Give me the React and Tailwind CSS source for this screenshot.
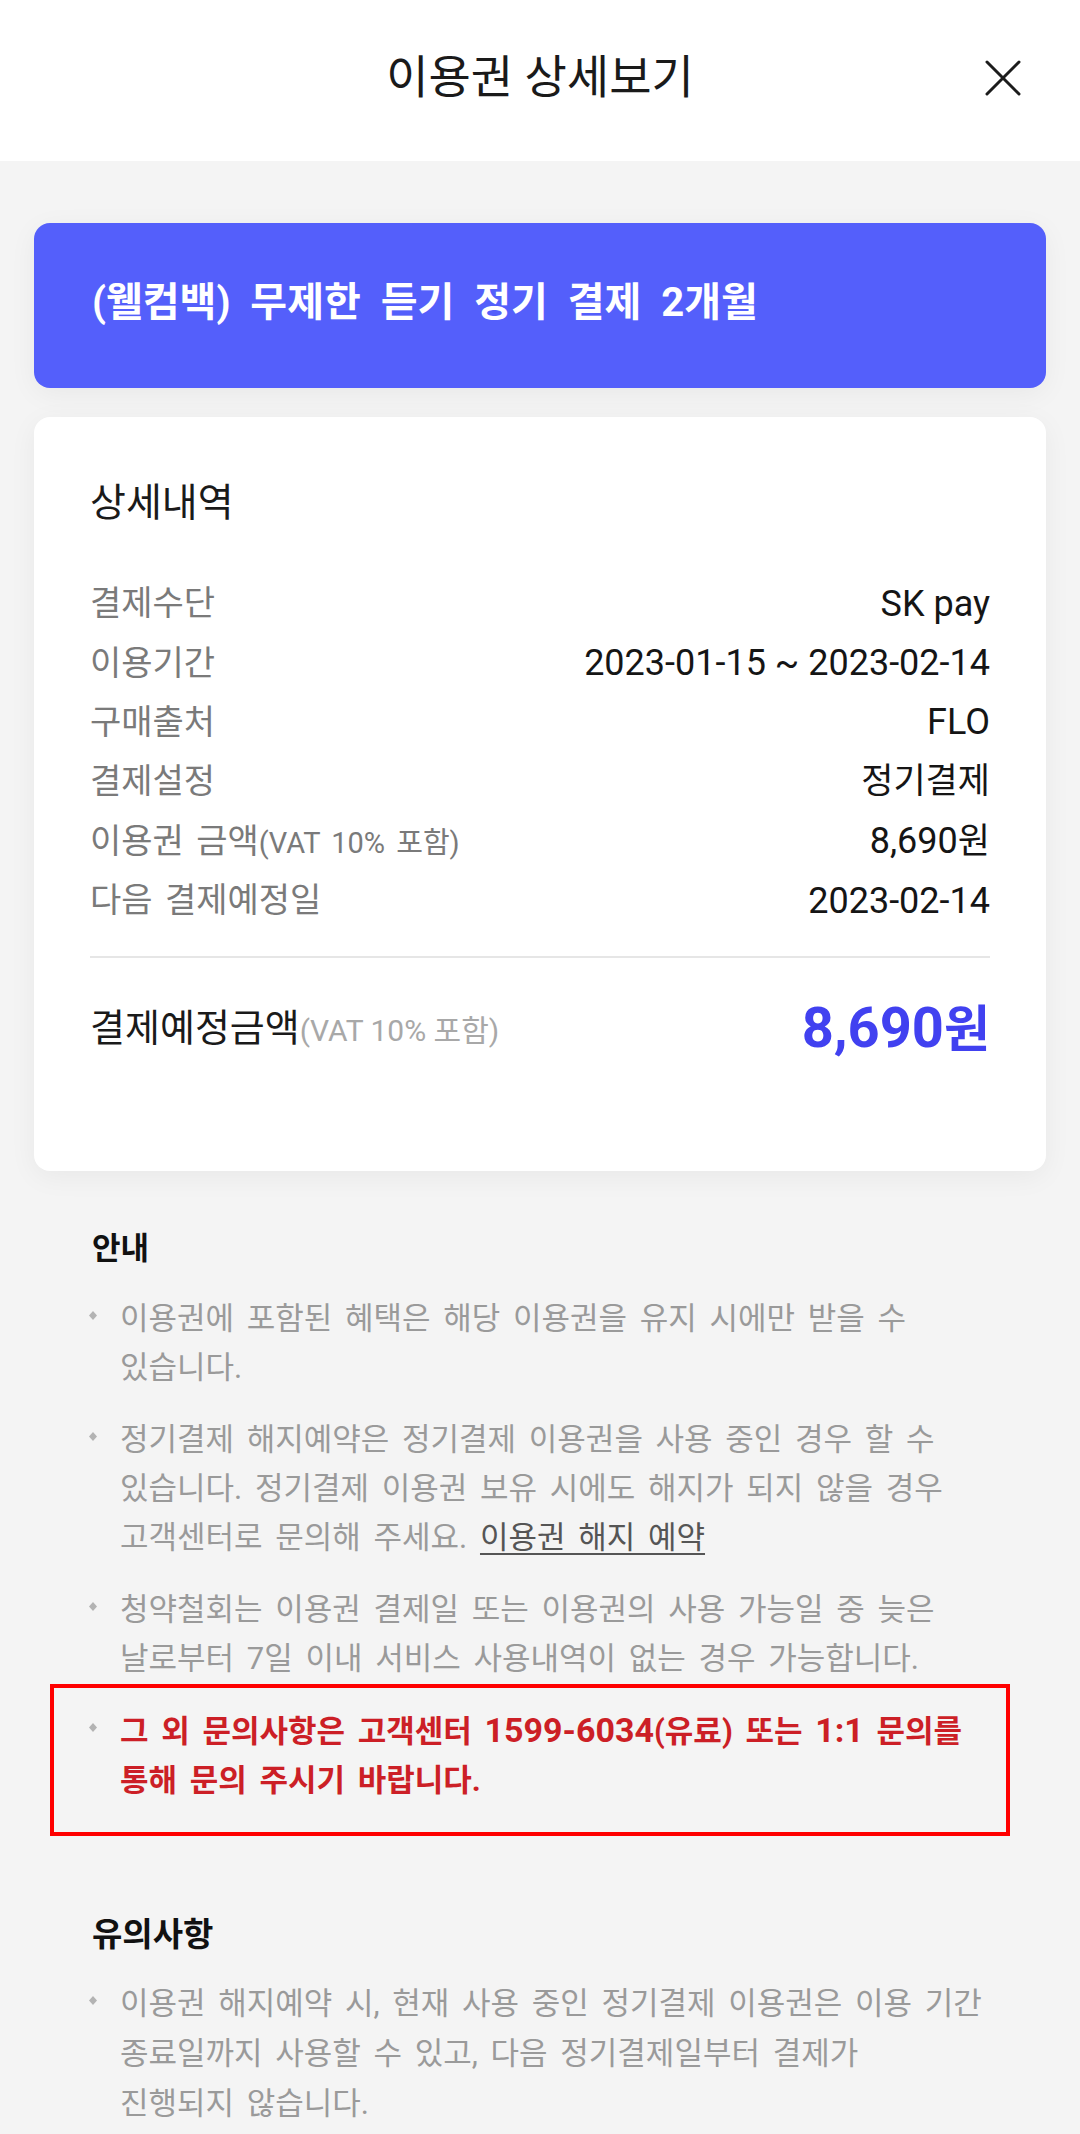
import React from 'react';

const rows = [
  { label: '결제수단', value: <span className="text-[36px]">SK pay</span> },
  { label: '이용기간', value: <span className="text-[36px]">2023-01-15 ~ 2023-02-14</span> },
  { label: '구매출처', value: <span className="text-[36px]">FLO</span> },
  { label: '결제설정', value: <span className="text-[35px]">정기결제</span> },
  {
    label: (
      <>
        <span className="[word-spacing:4px]">이용권 금액</span>
        <span className="text-[29px]">(VAT 10% 포함)</span>
      </>
    ),
    value: (
      <>
        <span className="text-[36px]">8,690</span>
        <span className="text-[35px]">원</span>
      </>
    ),
  },
  { label: '다음 결제예정일', value: <span className="text-[36px] [word-spacing:4px]">2023-02-14</span> },
];

function Bullet({ children, className = '' }) {
  return (
    <div className="flex">
      <div className="w-[28px] shrink-0 h-[49px] flex items-center">
        <svg width="8" height="9" viewBox="0 0 8 9" className="-ml-[3px] -mt-[6px]">
          <path d="M4 0 8 4.5 4 9 0 4.5Z" fill="#b3b3b3" />
        </svg>
      </div>
      <p className={`flex-1 whitespace-nowrap leading-[49px] text-[31px] [word-spacing:5px] ${className}`}>
        {children}
      </p>
    </div>
  );
}

export default function App() {
  return (
    <div className="min-h-[2134px] bg-[#f4f4f4] font-[Roboto,'Noto_Sans_CJK_KR',sans-serif] text-[#111]">
      {/* header */}
      <header className="h-[161px] bg-white grid grid-cols-[1fr_auto_1fr] items-center pb-[6px]">
        <div />
        <h1 className="text-[46px] font-normal text-[#1a1a1a]">이용권 상세보기</h1>
        <div className="flex justify-end pr-[59px]">
          <svg width="36" height="36" viewBox="0 0 36 36" fill="none">
            <path d="M2 2 34 34M34 2 2 34" stroke="#1c1c1c" strokeWidth="3" strokeLinecap="round" />
          </svg>
        </div>
      </header>

      <main className="px-[34px] pt-[62px]">
        <div className="h-[165px] rounded-[16px] bg-[#545ffb] flex items-center pl-[58px] pb-[6px] shadow-[0_6px_28px_rgba(0,0,0,0.05)]">
          <h2 className="text-white text-[40px] font-bold [word-spacing:10px]">(웰컴백) 무제한 듣기 정기 결제 2개월</h2>
        </div>

        <section className="mt-[29px] rounded-[16px] bg-white px-[56px] pt-[62px] pb-[113px] shadow-[0_6px_28px_rgba(0,0,0,0.05)]">
          <h3 className="text-[39px] leading-[48px] text-[#1a1a1a]">상세내역</h3>
          <div className="mt-[47px]">
            {rows.map((r, i) => (
              <div key={i} className="h-[59.4px] flex items-center justify-between">
                <span className="text-[34px] text-[#7a7a7a] [word-spacing:4px]">{r.label}</span>
                <span className="text-[#151515]">{r.value}</span>
              </div>
            ))}
          </div>
          <div className="mt-[26px] h-[2px] bg-[#e6e6e6]" />
          <div className="mt-[40px] h-[60px] flex items-center justify-between">
            <span className="text-[38px] text-[#1a1a1a]">
              결제예정금액<span className="text-[30px] text-[#a8a8a8]">(VAT 10% 포함)</span>
            </span>
            <span className="font-bold text-[#4141f0]">
              <span className="text-[56px]">8,690</span>
              <span className="text-[50px]">원</span>
            </span>
          </div>
        </section>
      </main>

      <section className="px-[92px] mt-[58px] pb-[40px]">
        <h4 className="text-[31px] font-bold leading-[40px] text-[#111]">안내</h4>
        <div className="mt-[25px] flex flex-col gap-[23px] text-[#9a9a9a]">
          <Bullet>
            이용권에 포함된 혜택은 해당 이용권을 유지 시에만 받을 수
            <br />
            있습니다.
          </Bullet>
          <Bullet>
            정기결제 해지예약은 정기결제 이용권을 사용 중인 경우 할 수
            <br />
            있습니다. 정기결제 이용권 보유 시에도 해지가 되지 않을 경우
            <br />
            고객센터로 문의해 주세요.{' '}
            <a className="text-[#555] underline underline-offset-[5px] decoration-[2px]">이용권 해지 예약</a>
          </Bullet>
          <Bullet>
            청약철회는 이용권 결제일 또는 이용권의 사용 가능일 중 늦은
            <br />
            날로부터 7일 이내 서비스 사용내역이 없는 경우 가능합니다.
          </Bullet>
          <div className="-ml-[42px] -mr-[22px] -mt-[22px] -mb-[31px] border-[4px] border-[#ff0000] pl-[38px] pr-[18px] pt-[18px] pb-[27px]">
            <Bullet className="text-[#cc1f26] font-bold">
              그 외 문의사항은 고객센터 <span className="text-[34px]">1599-6034</span>(유료) 또는{' '}
              <span className="text-[34px]">1:1</span> 문의를
              <br />
              통해 문의 주시기 바랍니다.
            </Bullet>
          </div>
        </div>

        <h4 className="mt-[110px] text-[33px] font-bold leading-[40px] text-[#111]">유의사항</h4>
        <div className="mt-[24px] flex flex-col gap-[23px] text-[#9a9a9a]">
          <Bullet className="leading-[50px]">
            이용권 해지예약 시, 현재 사용 중인 정기결제 이용권은 이용 기간
            <br />
            종료일까지 사용할 수 있고, 다음 정기결제일부터 결제가
            <br />
            진행되지 않습니다.
          </Bullet>
        </div>
      </section>
    </div>
  );
}
